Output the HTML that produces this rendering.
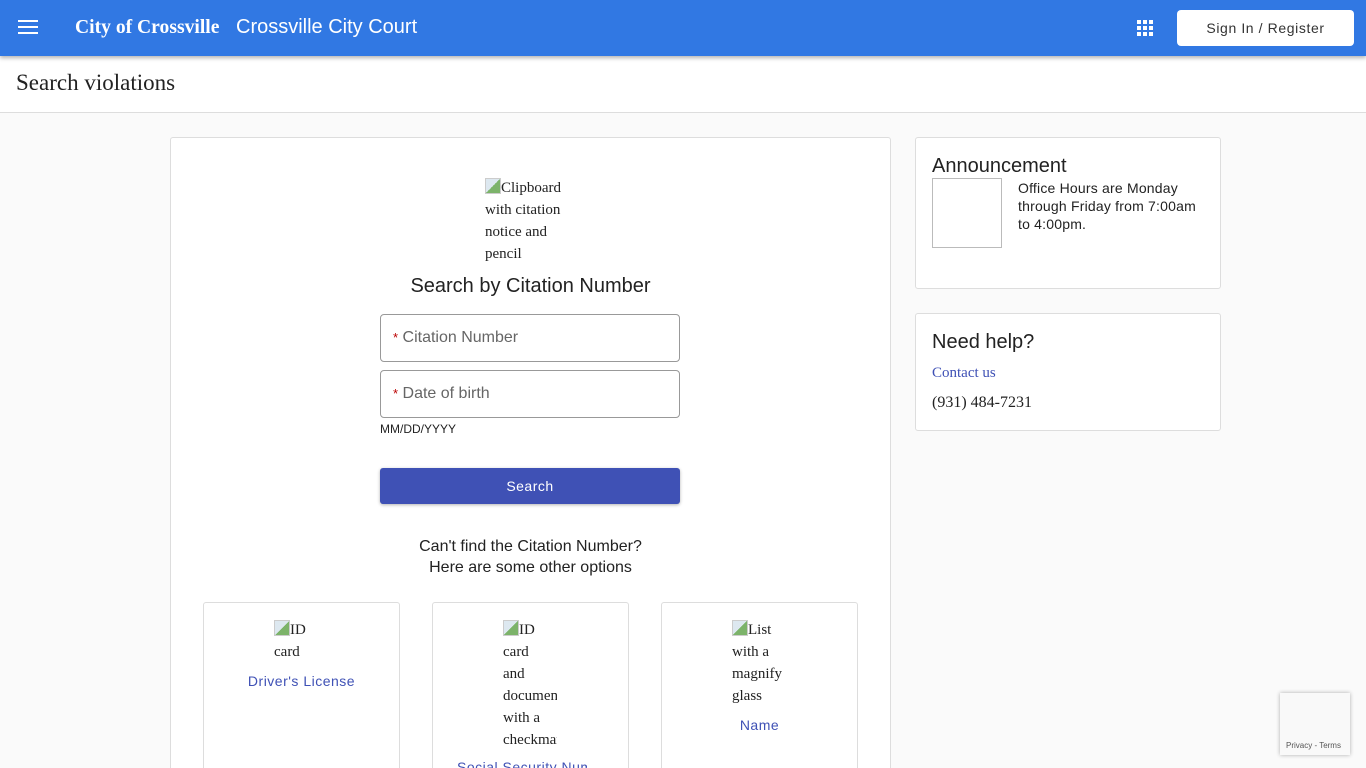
<!DOCTYPE html>
<html style="width:1366px;height:768px;overflow:hidden"><head><style>
*{box-sizing:border-box;margin:0;padding:0}
body{width:1366px;height:768px;overflow:hidden;background:#fafafa;font-family:"Liberation Sans",sans-serif;position:relative;color:#222}
.a{position:absolute}
.hdr{left:0;top:0;width:1366px;height:56px;background:#3178e3;box-shadow:0 2px 4px rgba(0,0,0,.3);z-index:2}
.serif{font-family:"Liberation Serif",serif}
.card{background:#fff;border:1px solid #ddd;border-radius:3px}
.inp{border:1px solid #999;border-radius:4px;background:#fff;font-size:16px;color:#666;padding:0 12px;line-height:46px}
.inp b{color:#b00;font-weight:normal;font-size:13px}
.img{font-family:"Liberation Serif",serif;font-size:15px;line-height:22px;color:#222;overflow:hidden}
.ic{display:inline-block;width:16px;height:16px;vertical-align:-2px;border:1px solid #ccc;background:linear-gradient(135deg,#dde8f0 50%,#7cb36a 50%)}
.lnk{color:#3f51b5;font-size:14px;letter-spacing:.5px}
</style></head><body>
<div class="a hdr">
 <div class="a" style="left:18px;top:20px;width:20px;height:2px;background:#fff;box-shadow:0 6px 0 #fff,0 12px 0 #fff"></div>
 <div class="a serif" style="left:75px;top:17px;color:#fff;font-weight:bold;font-size:19.6px">City of Crossville</div>
 <div class="a" style="left:236px;top:16px;color:#fff;font-size:20px">Crossville City Court</div>
 <svg class="a" style="left:1137px;top:20px" width="16" height="16" fill="#fff"><rect x="0" y="0" width="4" height="4"/><rect x="6" y="0" width="4" height="4"/><rect x="12" y="0" width="4" height="4"/><rect x="0" y="6" width="4" height="4"/><rect x="6" y="6" width="4" height="4"/><rect x="12" y="6" width="4" height="4"/><rect x="0" y="12" width="4" height="4"/><rect x="6" y="12" width="4" height="4"/><rect x="12" y="12" width="4" height="4"/></svg>
 <div class="a" style="left:1177px;top:10px;width:177px;height:36px;background:#fff;border-radius:4px;color:#333;font-size:14px;letter-spacing:.6px;text-align:center;line-height:36px">Sign In / Register</div>
</div>
<div class="a" style="left:0;top:56px;width:1366px;height:57px;background:#fff;border-bottom:1px solid #ddd"></div>
<div class="a serif" style="left:16px;top:70px;font-size:23px;color:#222">Search violations</div>

<div class="a card" style="left:170px;top:137px;width:721px;height:640px"></div>
<div class="a img" style="left:485px;top:177px;width:86px"><span class="ic"></span>Clipboard with citation notice and pencil</div>
<div class="a" style="left:170px;top:275px;width:721px;text-align:center;font-size:20px">Search by Citation Number</div>
<div class="a inp" style="left:380px;top:314px;width:300px;height:48px"><b>*</b> Citation Number</div>
<div class="a inp" style="left:380px;top:370px;width:300px;height:48px"><b>*</b> Date of birth</div>
<div class="a" style="left:380px;top:422px;font-size:12px">MM/DD/YYYY</div>
<div class="a" style="left:380px;top:468px;width:300px;height:36px;background:#3f51b5;border-radius:3px;color:#fff;font-size:14px;text-align:center;line-height:36px;letter-spacing:.5px;box-shadow:0 1px 3px rgba(0,0,0,.3)">Search</div>
<div class="a" style="left:170px;top:536px;width:721px;text-align:center;font-size:16px;line-height:21px">Can't find the Citation Number?<br>Here are some other options</div>

<div class="a card" style="left:203px;top:602px;width:197px;height:180px"></div>
<div class="a img" style="left:274px;top:619px;width:40px"><span class="ic"></span>ID card</div>
<div class="a lnk" style="left:203px;top:673px;width:197px;text-align:center">Driver's License</div>
<div class="a card" style="left:432px;top:602px;width:197px;height:180px"></div>
<div class="a img" style="left:503px;top:619px;width:54px"><span class="ic"></span>ID<br>card<br>and<br>document with a checkmark</div>
<div class="a lnk" style="left:457px;top:759px;width:130px;overflow:hidden;white-space:nowrap">Social Security Number</div>
<div class="a card" style="left:661px;top:602px;width:197px;height:180px"></div>
<div class="a img" style="left:732px;top:619px;width:56px"><span class="ic"></span>List with a magnify glass</div>
<div class="a lnk" style="left:661px;top:717px;width:197px;text-align:center">Name</div>

<div class="a card" style="left:915px;top:137px;width:306px;height:152px"></div>
<div class="a" style="left:932px;top:155px;font-size:20px">Announcement</div>
<div class="a" style="left:932px;top:178px;width:70px;height:70px;border:1px solid #bbb"></div>
<div class="a" style="left:1018px;top:179px;width:190px;font-size:14px;line-height:18px;letter-spacing:.2px">Office Hours are Monday through Friday from 7:00am to 4:00pm.</div>
<div class="a card" style="left:915px;top:313px;width:306px;height:118px"></div>
<div class="a" style="left:932px;top:331px;font-size:20px">Need help?</div>
<div class="a serif" style="left:932px;top:365px;font-size:15px;color:#3f51b5">Contact us</div>
<div class="a serif" style="left:932px;top:394px;font-size:16px">(931) 484-7231</div>

<div class="a" style="left:1280px;top:693px;width:70px;height:62px;background:#f9f9f9;box-shadow:0 0 4px rgba(0,0,0,.3);font-size:8px;color:#555;padding-top:48px;padding-left:6px">Privacy - Terms</div>
</body></html>
